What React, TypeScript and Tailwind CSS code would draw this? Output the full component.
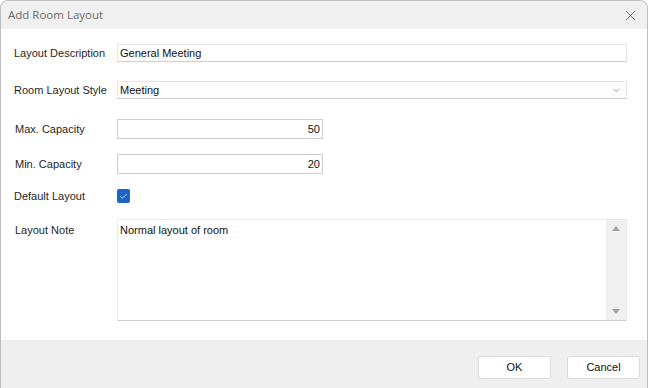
import { X, ChevronDown, Check } from 'lucide-react';

const font = { fontFamily: '"Liberation Sans", Arial, sans-serif' };

const Label = ({ text, className = '' }: { text: string; className?: string }) => (
  <div className={`w-[116px] shrink-0 whitespace-nowrap pl-[13px] text-[11px] text-[#1f1f1f] ${className}`}>{text}</div>
);

export default function App() {
  return (
    <div className="h-[388px] w-[649px] bg-white" style={font}>
      <div className="flex h-[388px] w-[648px] flex-col overflow-hidden rounded-t-[8px] border-r border-t border-l border-[#bdbdbd]">
        <div className="flex h-[28px] shrink-0 items-center justify-between bg-[#f0f0f0] pl-[7px] pr-[8px]">
          <span className="text-[11.5px] text-[#6b6b6b]" style={{ fontFamily: '"Open Sans", sans-serif' }}>Add Room Layout</span>
          <X size={17} strokeWidth={1} className="text-[#444]" />
        </div>

        <div className="flex h-[311px] flex-col bg-white pt-[15px]">
          <div className="flex h-[18px] items-center">
            <Label text="Layout Description" className="pl-[12px]" />
            <div className="flex h-[18px] w-[510px] items-center border border-[#e6e6e6] border-b-[#cfcfcf] px-[2px] text-[11px] text-[#111]">
              General Meeting
            </div>
          </div>

          <div className="mt-[19px] flex h-[18px] items-center">
            <Label text="Room Layout Style" />
            <div className="flex h-[18px] w-[510px] items-center justify-between border border-[#e6e6e6] border-b-[#cfcfcf] bg-[#fdfdfd] pl-[2px] pr-[4px] text-[11px] text-[#111]">
              <span>Meeting</span>
              <ChevronDown size={11} strokeWidth={1.3} className="text-[#666]" />
            </div>
          </div>

          <div className="mt-[20px] flex h-[20px] items-center">
            <Label text="Max. Capacity" className="pl-[14px]" />
            <div className="flex h-[20px] w-[206px] items-center justify-end border border-[#cfcfcf] pr-[2px] text-[11px] text-[#111]">
              50
            </div>
          </div>

          <div className="mt-[15px] flex h-[20px] items-center">
            <Label text="Min. Capacity" className="pl-[14px]" />
            <div className="flex h-[20px] w-[206px] items-center justify-end border border-[#cfcfcf] pr-[2px] text-[11px] text-[#111]">
              20
            </div>
          </div>

          <div className="mt-[15px] flex h-[14px] items-center">
            <Label text="Default Layout" className="pl-[12px]" />
            <div className="flex h-[14px] w-[13px] items-center justify-center rounded-[2px] bg-[#1b63c6]">
              <Check size={9} strokeWidth={2.2} className="text-[#e3edfb]" />
            </div>
          </div>

          <div className="mt-[16px] flex items-start">
            <Label text="Layout Note" className="pl-[14px] pt-[3px]" />
            <div className="flex h-[102px] w-[510px] border border-[#eaeaea] border-b-[#cfcfcf]">
              <div className="flex-1 px-[2px] pt-[2px] text-[11px] text-[#111]">Normal layout of room</div>
              <div className="flex w-[20px] flex-col items-center justify-between bg-[#f0f0f0] py-[6px]">
                <div className="h-0 w-0 border-x-[4px] border-b-[5px] border-x-transparent border-b-[#a3a3a3]" />
                <div className="h-0 w-0 border-x-[4px] border-t-[5px] border-x-transparent border-t-[#a3a3a3]" />
              </div>
            </div>
          </div>
        </div>

        <div className="flex flex-1 items-start justify-end gap-[16px] bg-[#efefef] pr-[7px] pt-[16px]">
          <button className="h-[23px] w-[73px] rounded-[3px] border border-[#dcdcdc] bg-white text-[11px] text-[#111]">OK</button>
          <button className="h-[23px] w-[73px] rounded-[3px] border border-[#dcdcdc] bg-white text-[11px] text-[#111]">Cancel</button>
        </div>
      </div>
    </div>
  );
}
